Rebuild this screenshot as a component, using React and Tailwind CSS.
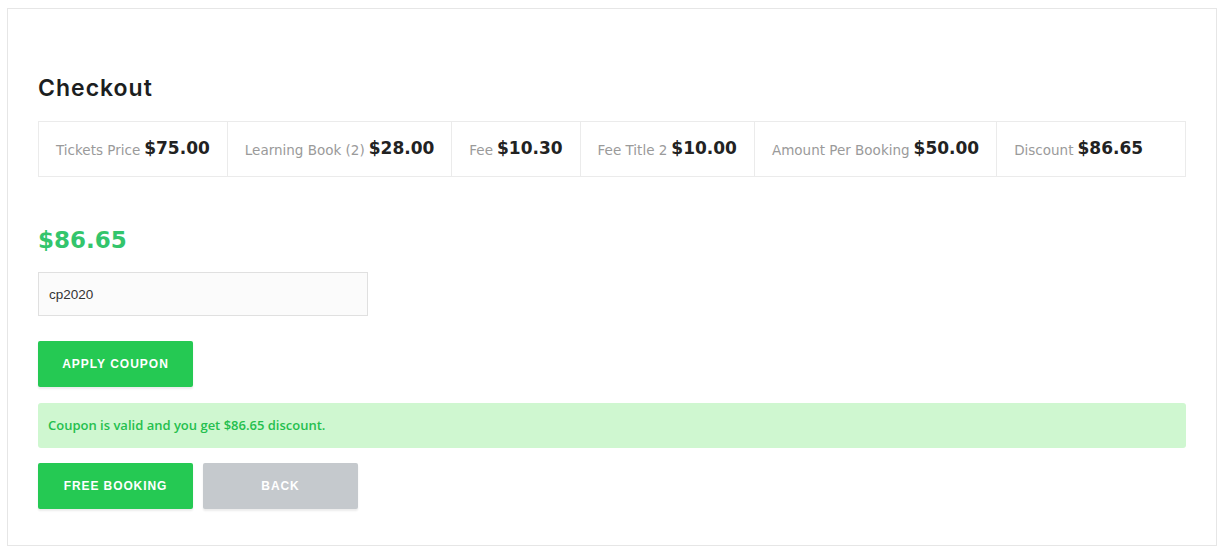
const items = [
  { label: 'Tickets Price', value: '$75.00' },
  { label: 'Learning Book (2)', value: '$28.00' },
  { label: 'Fee', value: '$10.30' },
  { label: 'Fee Title 2', value: '$10.00' },
  { label: 'Amount Per Booking', value: '$50.00' },
  { label: 'Discount', value: '$86.65' },
];

const App = () => {
  return (
    <div className="bg-white min-h-[552px] pt-[8px] px-[7px] pb-[7px]" style={{ fontFamily: '"DejaVu Sans", sans-serif' }}>
      <div className="border border-[#e6e6e6] px-[30px] pt-[65px] pb-[36px]">
        {/* Title */}
        <h2
          className="text-[23px] font-semibold text-[#1c1e21] leading-[28px] tracking-[1px]"
          style={{ fontFamily: 'Inter, sans-serif' }}
        >
          Checkout
        </h2>

        {/* Price breakdown */}
        <div className="mt-[19px] flex border border-[#ebebeb] h-[56px]">
          {items.map((it, i) => (
            <div
              key={it.label}
              className={
                'flex items-center px-[17px] whitespace-nowrap ' +
                (i < items.length - 1 ? 'border-r border-[#ebebeb]' : '')
              }
            >
              <span className="text-[13.5px] text-[#9a9a9a] mr-[4px] pt-[3px]">{it.label}</span>
              <span className="text-[17px] font-bold text-[#222]">{it.value}</span>
            </div>
          ))}
        </div>

        {/* Total */}
        <div className="mt-[48px] text-[23px] font-bold text-[#33c56c] leading-[30px]">$86.65</div>

        {/* Coupon input */}
        <input
          type="text"
          defaultValue="cp2020"
          className="mt-[17px] block w-[330px] h-[44px] bg-[#fbfbfb] border border-[#e0e0e0] px-[10px] text-[13.5px] text-[#333] outline-none"
          style={{ fontFamily: '"Liberation Sans", Arial, sans-serif' }}
        />

        <button
          className="mt-[25px] block w-[155px] h-[46px] bg-[#25c953] text-white text-[12px] font-bold tracking-[1px] rounded-[2px] shadow-[0_2px_2px_rgba(0,0,0,0.08)]"
          style={{ fontFamily: '"Liberation Sans", Arial, sans-serif' }}
        >
          APPLY COUPON
        </button>

        {/* Alert */}
        <div
          className="mt-[16px] h-[45px] flex items-center px-[10px] bg-[#cff7d0] rounded-[3px] text-[13px] font-semibold text-[#25bf4e]"
          style={{ fontFamily: '"Open Sans", sans-serif' }}
        >
          Coupon is valid and you get $86.65 discount.
        </div>

        {/* Actions */}
        <div className="mt-[15px] flex gap-[10px]" style={{ fontFamily: '"Liberation Sans", Arial, sans-serif' }}>
          <button className="w-[155px] h-[46px] bg-[#25c953] text-white text-[12px] font-bold tracking-[0.9px] rounded-[2px] shadow-[0_2px_2px_rgba(0,0,0,0.08)]">
            FREE BOOKING
          </button>
          <button className="w-[155px] h-[46px] bg-[#c5c9cd] text-white text-[12px] font-bold tracking-[0.9px] rounded-[2px] shadow-[0_2px_2px_rgba(0,0,0,0.08)]">
            BACK
          </button>
        </div>
      </div>
    </div>
  );
};

export default App;
